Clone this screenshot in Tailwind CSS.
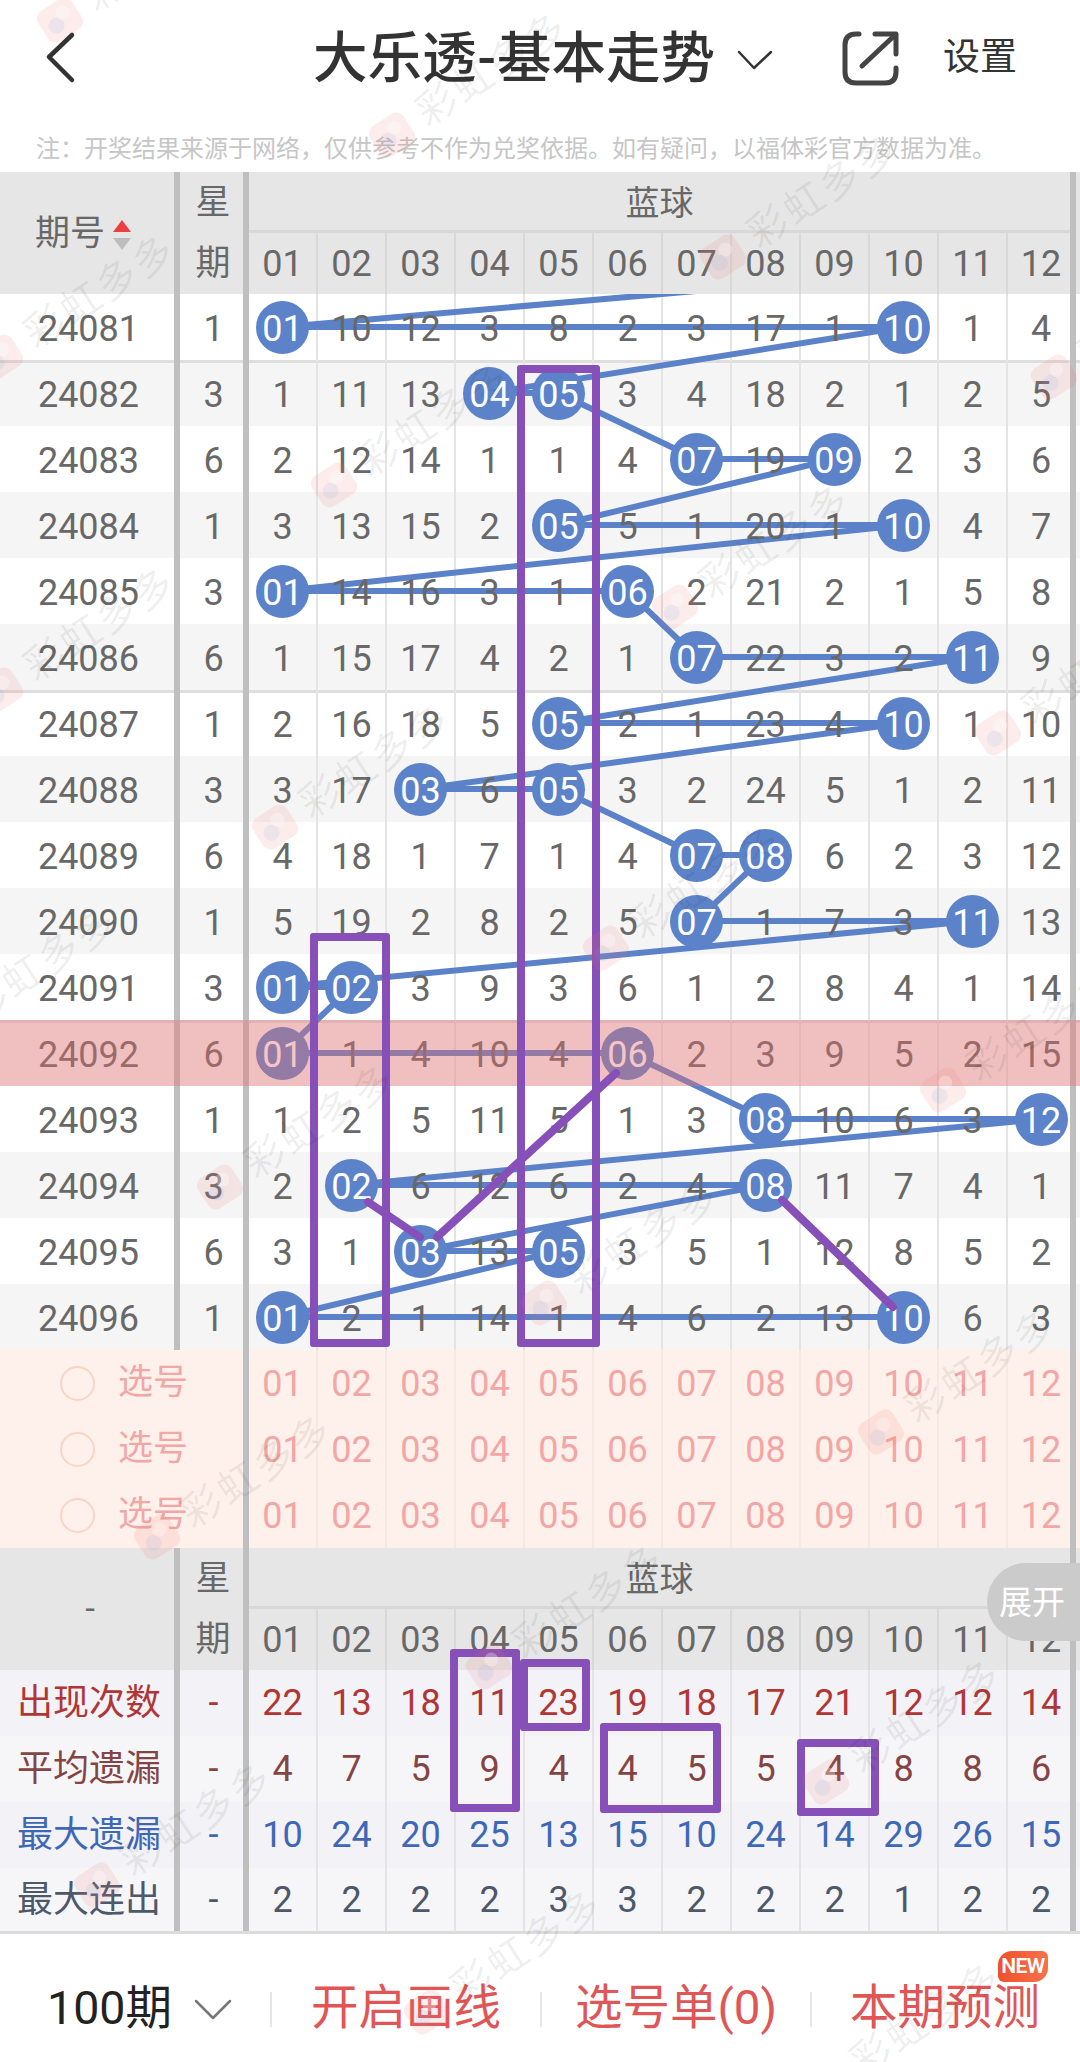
<!DOCTYPE html>
<html lang="zh-CN">
<head>
  <meta charset="UTF-8" />
  <meta name="viewport" content="width=device-width, initial-scale=1.0" />
  <title>大乐透-基本走势</title>
  <script src="https://cdn.jsdelivr.net/npm/@tailwindcss/browser@4"></script>
</head>
<body class="bg-white">
  <div class="relative w-[1080px] h-[2062px] overflow-hidden bg-white text-[#686868] text-[36px] font-['Roboto','Noto_Sans_CJK_SC',sans-serif]">

    <!-- nav -->
    <div class="relative h-[114px]">
      <svg class="absolute left-[44px] top-[30px]" width="34" height="56" viewBox="0 0 34 56" fill="none" stroke="#333" stroke-width="4.5" stroke-linecap="round" stroke-linejoin="round"><path d="M28 5 L5 27 L28 50"/></svg>
      <div class="absolute left-[313px] top-[23px] flex items-center h-[70px] text-[54.5px] leading-none font-medium text-[#333] whitespace-nowrap">大乐透<span class="mx-[1px]">-</span>基本走势</div>
      <svg class="absolute left-[736px] top-[48px]" width="38" height="24" viewBox="0 0 38 24" fill="none" stroke="#333" stroke-width="2.5" stroke-linecap="round" stroke-linejoin="round"><path d="M3 4 L18 20 L35 4"/></svg>
      <svg class="absolute left-[840px] top-[29px]" width="60" height="58" viewBox="0 0 60 58" fill="none" stroke="#444" stroke-width="5" stroke-linecap="round" stroke-linejoin="round">
        <path d="M19 5 H16 Q5 5 5 16 V43 Q5 54 16 54 H45 Q56 54 56 43 V39"/>
        <path d="M35 5 H56 V25"/>
        <path d="M22 37 L55 6"/>
      </svg>
      <div class="absolute left-[943px] top-[36px] text-[37px] leading-[44px] text-[#333] whitespace-nowrap">设置</div>
    </div>
    <div class="h-[58px] pt-[12px] pl-[36px] flex items-center text-[24px] text-[#c6c6c6] whitespace-nowrap">注：开奖结果来源于网络，仅供参考不作为兑奖依据。如有疑问，以福体彩官方数据为准。</div>

    <!-- table -->
    <div id="head1"></div>
    <div id="rows" class="relative">
      <svg id="trend" class="absolute left-0 top-0 z-10" width="1080" height="1056" viewBox="0 0 1080 1056" fill="none"></svg>
      <div class="absolute left-0 top-[726px] w-full h-[66px] bg-[#e87070]/40 z-30"></div>
      <svg class="absolute left-0 top-0 z-40" width="1080" height="1056" viewBox="0 0 1080 1056" fill="none" stroke="#8650b8" stroke-width="8" stroke-linecap="round">
        <path d="M368 908 L420 943"/>
        <path d="M437 943 L616 779"/>
        <path d="M782 906 L893 1013"/>
      </svg>
    </div>
    <div id="picks"></div>
    <div id="head2"></div>
    <div id="stats"></div>
    <div class="h-[3px] bg-[#dcdcdc]"></div>

    <!-- bottom bar -->
    <div class="relative h-[130px] flex items-center pt-[20px] text-[47.5px] text-[#e05656] whitespace-nowrap">
      <div class="w-[270px] pl-[47px] flex items-center gap-[22px] text-[#222]">
        <span class="text-[46.5px]">100期</span>
        <svg width="38" height="22" viewBox="0 0 38 22" fill="none" stroke="#777" stroke-width="2.5" stroke-linecap="round" stroke-linejoin="round"><path d="M2 3 L19 20 L36 3"/></svg>
      </div>
      <div class="w-[2px] h-[35px] bg-[#e5e5e5]"></div>
      <div class="w-[268px] text-center">开启画线</div>
      <div class="w-[2px] h-[35px] bg-[#e5e5e5]"></div>
      <div class="w-[268px] text-center">选号单(0)</div>
      <div class="w-[2px] h-[35px] bg-[#e5e5e5]"></div>
      <div class="w-[266px] text-center">本期预测</div>
      <div class="absolute left-[998px] top-[17px] w-[50px] h-[31px] flex items-center justify-center rounded-tl-[14px] rounded-br-[14px] rounded-tr-[6px] rounded-bl-[6px] bg-gradient-to-r from-[#f0502c] to-[#f8724a] text-white text-[21px] font-semibold tracking-[-0.5px]">NEW</div>
    </div>

    <!-- 展开 tab -->
    <div class="absolute left-[987px] top-[1563px] w-[93px] h-[78px] pl-[12px] flex items-center rounded-l-[39px] bg-[#cbcbcb] text-white text-[33px] leading-none z-20 whitespace-nowrap">展开</div>

    <!-- purple marks -->
    <div class="absolute left-[310px] top-[933px] w-[80px] h-[414px] border-8 border-[#8650b8] rounded-[3px] z-40"></div>
    <div class="absolute left-[517px] top-[365px] w-[83px] h-[982px] border-8 border-[#8650b8] rounded-[3px] z-40"></div>
    <div class="absolute left-[450px] top-[1649px] w-[70px] h-[163px] border-8 border-[#8650b8] rounded-[3px] z-40"></div>
    <div class="absolute left-[520px] top-[1659px] w-[70px] h-[72px] border-8 border-[#8650b8] rounded-[3px] z-40"></div>
    <div class="absolute left-[600px] top-[1723px] w-[121px] h-[90px] border-8 border-[#8650b8] rounded-[3px] z-40"></div>
    <div class="absolute left-[797px] top-[1739px] w-[82px] h-[77px] border-8 border-[#8650b8] rounded-[3px] z-40"></div>

    <!-- watermark -->
    <div id="marks" class="absolute inset-0 z-50 pointer-events-none"></div>
  </div>

  <script>
    const sep = '<div class="w-[6px] shrink-0 bg-[#bfbfbf]"></div>';

    // one of the 12 number cells, the last one stops at the right bar
    function cell(i, inner, line) {
      if (i === 11) return `<div class="w-[62px] shrink-0 pl-[4px] flex items-center justify-center">${inner}</div>`;
      return `<div class="w-[69px] shrink-0 flex items-center justify-center border-r-2 ${line}">${inner}</div>`;
    }

    function head(left) {
      let nums = "";
      for (let i = 0; i < 12; i++) nums += cell(i, `<span class="relative">${String(i + 1).padStart(2, "0")}</span>`, "border-[#d8d8d8]");
      return `<div class="flex h-[122px] bg-[#e6e6e6]">
        <div class="w-[174px] shrink-0 flex items-center justify-center text-[35px]">${left}</div>${sep}
        <div class="w-[63px] shrink-0 pl-[3px] flex flex-col text-[35px] leading-none"><span class="h-[61px] flex items-center justify-center">星</span><span class="h-[61px] flex items-center justify-center">期</span></div>${sep}
        <div class="w-[821px] shrink-0 flex flex-col">
          <div class="h-[61px] pt-[4px] flex items-center justify-center text-[34px] border-b-[3px] border-[#d8d8d8]">蓝球</div>
          <div class="h-[61px] flex">${nums}</div>
        </div>${sep}
      </div>`;
    }

    document.getElementById("head1").innerHTML = head(`<span class="pt-[3px]">期号</span>
      <span class="ml-[8px] mr-[8px] pt-[3px] flex flex-col gap-[6px]">
        <span class="block w-0 h-0 border-x-[9px] border-x-transparent border-b-[12px] border-b-[#ee3f3f]"></span>
        <span class="block w-0 h-0 border-x-[9px] border-x-transparent border-t-[12px] border-t-[#bdbdbd]"></span>
      </span>`);
    document.getElementById("head2").innerHTML = head(`<span class="pl-[6px]">-</span>`);

    // * marks a drawn ball
    const data = [
      ["24081", 1, "*01 10 12 3 8 2 3 17 1 *10 1 4"],
      ["24082", 3, "1 11 13 *04 *05 3 4 18 2 1 2 5"],
      ["24083", 6, "2 12 14 1 1 4 *07 19 *09 2 3 6"],
      ["24084", 1, "3 13 15 2 *05 5 1 20 1 *10 4 7"],
      ["24085", 3, "*01 14 16 3 1 *06 2 21 2 1 5 8"],
      ["24086", 6, "1 15 17 4 2 1 *07 22 3 2 *11 9"],
      ["24087", 1, "2 16 18 5 *05 2 1 23 4 *10 1 10"],
      ["24088", 3, "3 17 *03 6 *05 3 2 24 5 1 2 11"],
      ["24089", 6, "4 18 1 7 1 4 *07 *08 6 2 3 12"],
      ["24090", 1, "5 19 2 8 2 5 *07 1 7 3 *11 13"],
      ["24091", 3, "*01 *02 3 9 3 6 1 2 8 4 1 14"],
      ["24092", 6, "*01 1 4 10 4 *06 2 3 9 5 2 15"],
      ["24093", 1, "1 2 5 11 5 1 3 *08 10 6 3 *12"],
      ["24094", 3, "2 *02 6 12 6 2 4 *08 11 7 4 1"],
      ["24095", 6, "3 1 *03 13 *05 3 5 1 12 8 5 2"],
      ["24096", 1, "*01 2 1 14 1 4 6 2 13 *10 6 3"],
    ];

    let rowsHtml = "";
    const points = [[1041, -33]];
    data.forEach((row, r) => {
      const y = 33 + r * 66;
      const cells = row[2].split(" ").map((v, i) => {
        if (v[0] === "*") {
          points.push([i === 11 ? 1041 : 282.5 + i * 69, y]);
          return cell(i, `<span class="relative z-20 w-[53px] h-[53px] shrink-0 pt-[3px] rounded-full bg-[#5c83c9] text-white flex items-center justify-center">${v.slice(1)}</span>`, "border-[#e4e4e4]");
        }
        return cell(i, `<span class="relative top-[2px] z-20">${v}</span>`, "border-[#e4e4e4]");
      }).join("");
      const bg = r % 2 ? "bg-[#f5f5f5]" : "bg-white";
      const rule = r % 5 === 1 ? "shadow-[inset_0_3px_0_#dedede]" : "";
      rowsHtml += `<div class="flex h-[66px] ${bg} ${rule}">
        <div class="w-[174px] shrink-0 pl-[3px] flex items-center justify-center"><span class="relative top-[2px] z-20">${row[0]}</span></div>${sep}
        <div class="w-[63px] shrink-0 pl-[4px] flex items-center justify-center"><span class="relative top-[2px] z-20">${row[1]}</span></div>${sep}
        ${cells}${sep}
      </div>`;
    });
    document.getElementById("rows").insertAdjacentHTML("afterbegin", rowsHtml);
    document.getElementById("trend").innerHTML =
      `<polyline points="${points.map(p => p.join(",")).join(" ")}" stroke="#5b82c8" stroke-width="6" stroke-linejoin="round"/>`;

    let picksHtml = "";
    for (let r = 0; r < 3; r++) {
      let nums = "";
      for (let i = 0; i < 12; i++) nums += cell(i, `<span class="relative top-[1px]">${String(i + 1).padStart(2, "0")}</span>`, "border-[#f6e9e4]");
      picksHtml += `<div class="flex h-[66px] bg-[#fef0ea] text-[#f2a6a6]">
        <div class="w-[243px] shrink-0 flex items-center pl-[60px] gap-[23px] text-[35px]"><span class="w-[35px] h-[35px] rounded-full border-2 border-[#fbd3c7]"></span>选号</div>${sep}
        ${nums}${sep}
      </div>`;
    }
    document.getElementById("picks").innerHTML = picksHtml;

    const stats = [
      ["出现次数", "22 13 18 11 23 19 18 17 21 12 12 14", "text-[#b03636]", "bg-[#f2f2f7]"],
      ["平均遗漏", "4 7 5 9 4 4 5 5 4 8 8 6", "text-[#854444]", "bg-[#f6f6f8]"],
      ["最大遗漏", "10 24 20 25 13 15 10 24 14 29 26 15", "text-[#3e68b6]", "bg-[#f2f2f7]"],
      ["最大连出", "2 2 2 2 3 3 2 2 2 1 2 2", "text-[#4d586a]", "bg-[#f6f6f8]"],
    ];
    document.getElementById("stats").innerHTML = stats.map((s, r) => {
      const cells = s[1].split(" ").map((v, i) => cell(i, v, "border-[#e4e4e4]")).join("");
      return `<div class="flex ${r === 3 ? "h-[63px]" : "h-[66px]"} ${s[2]} ${s[3]}">
        <div class="w-[174px] shrink-0 flex items-center justify-center text-[36px] pl-[4px]">${s[0]}</div>${sep}
        <div class="w-[63px] shrink-0 pl-[4px] flex items-center justify-center">-</div>${sep}
        ${cells}${sep}
      </div>`;
    }).join("");

    // rotated 彩虹多多 logo + text, x/y is the centre of the logo
    const marks = [[60,20],[392,135],[723,257],[0,357],[1054,377],[334,485],[675,607],[998,733],[0,690],[275,827],[606,948],[943,1090],[220,1187],[544,1303],[-58,1030],[157,1537],[881,1432],[489,1667],[826,1782],[97,1885],[427,2012],[826,2085]];
    document.getElementById("marks").innerHTML = marks.map(m => `
      <div class="absolute flex items-center gap-[12px] h-[44px] origin-[22px_50%] -rotate-[33deg] text-[40px] tracking-[3px] leading-none text-black/[0.07] whitespace-nowrap" style="left:${m[0] - 22}px;top:${m[1] - 22}px">
        <svg width="44" height="44" viewBox="0 0 44 44"><rect x="2" y="4" width="40" height="36" rx="9" fill="#f06a6a" fill-opacity="0.13"/><circle cx="16" cy="25" r="8" fill="#7fa8e8" fill-opacity="0.12"/><circle cx="28" cy="17" r="7" fill="#fff" fill-opacity="0.3"/></svg>
        <span>彩虹多多</span>
      </div>`).join("");
  </script>
</body>
</html>
